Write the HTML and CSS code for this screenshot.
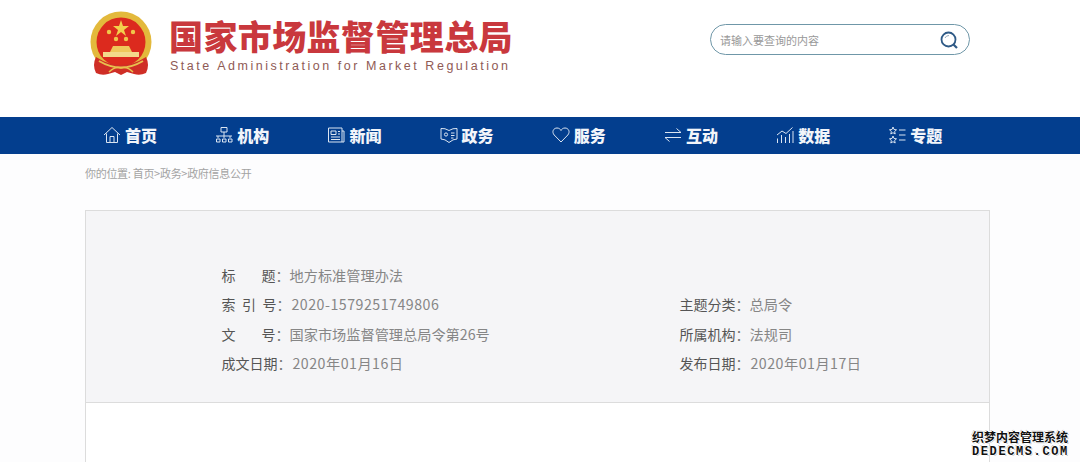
FILE: index.html
```html
<!DOCTYPE html>
<html lang="en">
<head>
    <meta charset="UTF-8">
    <meta name="viewport" content="width=device-width, initial-scale=1.0">
    <title>国家市场监督管理总局</title>
    <link rel="stylesheet" href="styles.css">
</head>
<body>
    <header class="header">
        <div class="logo">
            <svg class="emblem" width="66" height="66" viewBox="0 0 66 66">
                <circle cx="33" cy="31" r="30.5" fill="#e3b93c"/>
                <circle cx="33" cy="31" r="24.5" fill="#dc2a1e"/>
                <polygon points="33,9 35,15 41,15 36,19 38,25 33,21 28,25 30,19 25,15 31,15" fill="#f3cf4c"/>
                <g fill="#f0c64a">
                    <circle cx="21" cy="21" r="2.2"/>
                    <circle cx="45" cy="21" r="2.2"/>
                    <circle cx="28" cy="28" r="2.2"/>
                    <circle cx="38" cy="28" r="2.2"/>
                </g>
                <path d="M22 41 L25 35 H41 L44 41 Z" fill="#efc75a"/>
                <rect x="15" y="41" width="36" height="5" fill="#f3d98a"/>
                <path d="M8 46 Q33 62 58 46 Q62 54 58 62 Q52 65 46 63 L39 61 L33 64 L27 61 L20 63 Q14 65 8 62 Q4 54 8 46 Z" fill="#cf2e26"/>
                <path d="M11 50 Q33 63 55 50" fill="none" stroke="#e8c04e" stroke-width="2"/>
                <path d="M21 61 Q27 55 33 57 Q39 55 45 61" fill="none" stroke="#e8c04e" stroke-width="1.6"/>
            </svg>
            <div class="logo-text">
                <div class="logo-cn">国家市场监督管理总局</div>
                <div class="logo-en">State Administration for Market Regulation</div>
            </div>
        </div>
        <div class="search">
            <span>请输入要查询的内容</span>
            <svg width="20" height="20" viewBox="0 0 20 20" fill="none" stroke="#2f5a86">
                <circle cx="9.5" cy="9.5" r="7" stroke-width="1.8"/>
                <path d="M14.5 14.5 L18 18" stroke-width="2.2"/>
                <path d="M6 8 Q7 5.5 10 5.5" stroke="#9ab" stroke-width="1"/>
            </svg>
        </div>
    </header>

    <nav class="nav">
        <a class="nav-item">
            <svg class="nav-icon" viewBox="0 0 18 18"><path d="M1 9 L9 1.5 L17 9 M3.5 7.5 V16.5 H14.5 V7.5 M7 16.5 V10.5 H11 V16.5"/></svg>
            首页
        </a>
        <a class="nav-item">
            <svg class="nav-icon" viewBox="0 0 18 18"><path d="M6 1.5 H12 V6 H6 Z M1 10 H17 M9 6 V10 M3 10 V12 M9 10 V12 M15 10 V12 M1.5 13 H5 V16 H1.5 Z M7.5 13 H11 V16 H7.5 Z M13.5 13 H17 V16 H13.5 Z"/></svg>
            机构
        </a>
        <a class="nav-item">
            <svg class="nav-icon" viewBox="0 0 18 18"><path d="M1.5 2 H15 V16 H1.5 Z M15 5 H17 V16 H15 M4 5 H9 V8.5 H4 Z M11 5.5 H13 M11 8 H13 M4 11 H13 M4 13.5 H13"/></svg>
            新闻
        </a>
        <a class="nav-item">
            <svg class="nav-icon" viewBox="0 0 18 18"><path d="M1 2.5 Q5 2 9 4.5 Q13 2 17 2.5 V13 Q13 13 9 16.5 Q5 13 1 13 Z M11 7 H14.5 M11 9.5 H14.5 M11 12 H13.5"/><circle cx="6" cy="8.5" r="1.6"/></svg>
            政务
        </a>
        <a class="nav-item">
            <svg class="nav-icon" viewBox="0 0 18 18"><path d="M9 16 L2.2 9 C-0.5 5.8 1.5 2 5 2 C7 2 8.2 3 9 4.5 C9.8 3 11 2 13 2 C16.5 2 18.5 5.8 15.8 9 Z"/></svg>
            服务
        </a>
        <a class="nav-item">
            <svg class="nav-icon" viewBox="0 0 18 18"><path d="M1 6.5 H17 L12.5 2.5 M17 11.5 H1 L5.5 15.5"/></svg>
            互动
        </a>
        <a class="nav-item">
            <svg class="nav-icon" viewBox="0 0 18 18"><path d="M1 9 L6 5 L10 7.5 L16.5 1.5 M1.5 17 V12.5 M5.5 17 V9 M9.5 17 V11 M13.5 17 V8 M17 17 V5"/></svg>
            数据
        </a>
        <a class="nav-item">
            <svg class="nav-icon" viewBox="0 0 18 18"><path d="M5 1 L6 3.5 L8.5 3.8 L6.6 5.5 L7.2 8 L5 6.7 L2.8 8 L3.4 5.5 L1.5 3.8 L4 3.5 Z M5 10 L6 12.5 L8.5 12.8 L6.6 14.5 L7.2 17 L5 15.7 L2.8 17 L3.4 14.5 L1.5 12.8 L4 12.5 Z M11 4 H17.5 M11 9 H17.5 M11 14 H17.5"/></svg>
            专题
        </a>
    </nav>

    <div class="crumb">你的位置: 首页&gt;政务&gt;政府信息公开</div>

    <main class="card">
        <section class="meta">
            <div class="meta-row">
                <span class="label label-short">标 题</span><span class="colon">：</span><span class="value">地方标准管理办法</span>
            </div>
            <div class="meta-row"></div>
            <div class="meta-row">
                <span class="label label-mid">索 引 号</span><span class="colon">：</span><span class="value value-num">2020-1579251749806</span>
            </div>
            <div class="meta-row">
                <span class="label">主题分类</span><span class="colon">：</span><span class="value">总局令</span>
            </div>
            <div class="meta-row">
                <span class="label label-short">文 号</span><span class="colon">：</span><span class="value">国家市场监督管理总局令第26号</span>
            </div>
            <div class="meta-row">
                <span class="label">所属机构</span><span class="colon">：</span><span class="value">法规司</span>
            </div>
            <div class="meta-row">
                <span class="label">成文日期</span><span class="colon">：</span><span class="value value-num">2020年01月16日</span>
            </div>
            <div class="meta-row">
                <span class="label">发布日期</span><span class="colon">：</span><span class="value value-num">2020年01月17日</span>
            </div>
        </section>
    </main>

    <div class="watermark">
        <div class="wm-cn">织梦内容管理系统</div>
        <div class="wm-en">DEDECMS.COM</div>
    </div>
</body>
</html>
```

FILE: styles.css
```css
* {
    box-sizing: border-box;
}

html, body {
    height: 100%;
}

body {
    margin: 0;
    overflow: hidden;
    position: relative;
    background-color: #fdfdfe;
    font-family: "Noto Sans CJK SC", "Liberation Sans", sans-serif;
}

.header {
    height: 117px;
    padding: 11px 110px 0 88px;
    display: flex;
    justify-content: space-between;
    align-items: flex-start;
    background: #fff;
}

.logo {
    display: flex;
    gap: 15px;
}

.logo-text {
    padding-top: 5px;
}

.logo-cn {
    font-size: 34px;
    line-height: 40px;
    font-weight: 900;
    letter-spacing: 0.4px;
    color: #c9383d;
    white-space: nowrap;
}

.logo-en {
    margin-top: 2px;
    font-family: "Liberation Sans", sans-serif;
    font-size: 12.5px;
    line-height: 16px;
    letter-spacing: 2.53px;
    padding-left: 1px;
    color: #8f5a55;
    white-space: nowrap;
}

.search {
    width: 260px;
    height: 31px;
    margin-top: 13px;
    padding: 0 10px 0 9px;
    display: flex;
    justify-content: space-between;
    align-items: center;
    background: #fff;
    border: 1px solid #6f97a8;
    border-radius: 16px;
    font-size: 11px;
    color: #999;
}

.nav {
    height: 37px;
    padding-left: 103px;
    display: flex;
    background-color: #033e8e;
}

.nav-item {
    width: 112.2px;
    padding-bottom: 2px;
    display: flex;
    align-items: center;
    gap: 4px;
    font-size: 16px;
    line-height: 22px;
    font-weight: 900;
    color: #f2f5fa;
}

.nav-icon {
    width: 18px;
    height: 18px;
    fill: none;
    stroke: #dbe5f2;
    stroke-width: 1;
}

.crumb {
    margin: 11px 0 0 85px;
    font-size: 11px;
    line-height: 17px;
    letter-spacing: -0.3px;
    color: #a3a3a3;
}

.card {
    height: 260px;
    margin: 28px 90px 0 85px;
    background: #fff;
    border: 1px solid #dcdcdc;
    border-bottom: none;
}

.meta {
    height: 192px;
    padding: 49px 0 0 135.5px;
    display: grid;
    grid-template-columns: 458px 1fr;
    grid-auto-rows: 29.5px;
    background-color: #f5f5f7;
    border-bottom: 1px solid #dcdcdc;
    font-size: 14px;
}

.meta-row {
    display: flex;
    align-items: center;
    white-space: nowrap;
}

.label {
    width: 56px;
    color: #555;
    text-align-last: justify;
}

.label-short {
    width: 54px;
}

.label-mid {
    width: 55px;
}

.colon {
    width: 14px;
    color: #777;
}

.value {
    font-size: 14.2px;
    color: #868686;
}

.value-num {
    padding-left: 1px;
    letter-spacing: 0.5px;
}

.watermark {
    position: absolute;
    left: 972px;
    top: 428px;
    width: 97px;
    color: #111;
    font-weight: 700;
    text-shadow: 1px 0 0 #fff, -1px 0 0 #fff, 0 1px 0 #fff, 0 -1px 0 #fff, 1px 1px 0 #bbb, -1px -1px 0 #bbb;
}

.wm-cn {
    font-size: 12px;
    line-height: 17px;
    white-space: nowrap;
}

.wm-en {
    font-family: "Liberation Mono", monospace;
    font-size: 12px;
    line-height: 15px;
    letter-spacing: 1.6px;
    white-space: nowrap;
}
```
